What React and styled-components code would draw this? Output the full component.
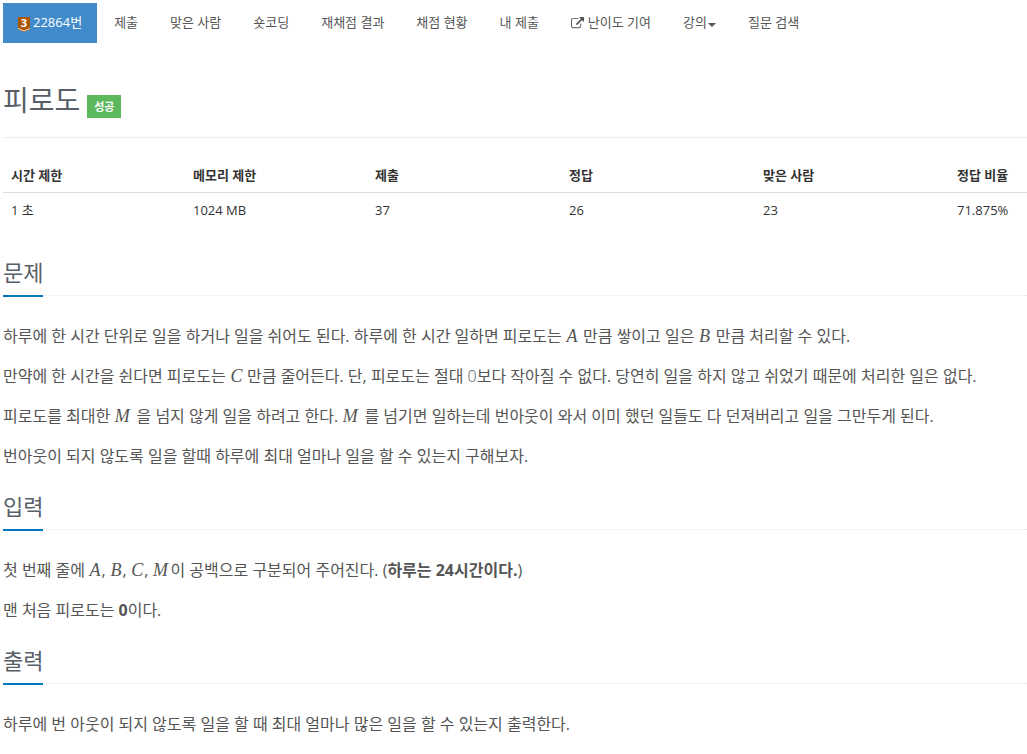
import React from 'react';
import styled, { createGlobalStyle } from 'styled-components'

const menu = [
	{ text: '제출' },
	{ text: '맞은 사람' },
	{ text: '숏코딩' },
	{ text: '재채점 결과' },
	{ text: '채점 현황' },
	{ text: '내 제출' },
	{ text: '난이도 기여', external: true },
	{ text: '강의', caret: true },
	{ text: '질문 검색' },
]

const limits = [
	['시간 제한', '1 초'],
	['메모리 제한', '1024 MB'],
	['제출', '37'],
	['정답', '26'],
	['맞은 사람', '23'],
	['정답 비율', '71.875%'],
]

export default function App() {
	return (
		<Page>
			<GlobalStyle />
			<Nav>
				<NavItem $active><TierBadge />22864번</NavItem>
				{menu.map(item => (
					<NavItem key={item.text}>
						{item.external && <ExternalIcon />}
						{item.text}
						{item.caret && <Caret />}
					</NavItem>
				))}
			</Nav>

			<TitleBar>
				<Title>피로도</Title>
				<Label>성공</Label>
			</TitleBar>

			<Table>
				<thead>
					<tr>{limits.map(([name]) => <Th key={name}>{name}</Th>)}</tr>
				</thead>
				<tbody>
					<tr>{limits.map(([name, value]) => <Td key={name}>{value}</Td>)}</tr>
				</tbody>
			</Table>

			<Section>
				<Headline><H2>문제</H2></Headline>
				<P>하루에 한 시간 단위로 일을 하거나 일을 쉬어도 된다. 하루에 한 시간 일하면 피로도는 <Var $w={13}>A</Var> 만큼 쌓이고 일은 <Var $w={13}>B</Var> 만큼 처리할 수 있다.</P>
				<P>만약에 한 시간을 쉰다면 피로도는 <Var $w={13}>C</Var> 만큼 줄어든다. 단, 피로도는 절대 <Light>0</Light>보다 작아질 수 없다. 당연히 일을 하지 않고 쉬었기 때문에 처리한 일은 없다.</P>
				<P>피로도를 최대한 <Var $w={18}>M</Var> 을 넘지 않게 일을 하려고 한다. <Var $w={18}>M</Var> 를 넘기면 일하는데 번아웃이 와서 이미 했던 일들도 다 던져버리고 일을 그만두게 된다.</P>
				<P>번아웃이 되지 않도록 일을 할때 하루에 최대 얼마나 일을 할 수 있는지 구해보자.</P>
			</Section>

			<Section>
				<Headline><H2>입력</H2></Headline>
				<P>첫 번째 줄에 <Var $w={12.5}>A</Var>, <Var $w={12.5}>B</Var>, <Var $w={13.5}>C</Var>, <Var $w={18}>M</Var>이 공백으로 구분되어 주어진다. (<b>하루는 24시간이다.</b>)</P>
				<P>맨 처음 피로도는 <b>0</b>이다.</P>
			</Section>

			<Section>
				<Headline><H2>출력</H2></Headline>
				<P>하루에 번 아웃이 되지 않도록 일을 할 때 최대 얼마나 많은 일을 할 수 있는지 출력한다.</P>
			</Section>
		</Page>
	)
}

function TierBadge() {
	return (
		<Badge viewBox="0 0 12 15">
			<path d="M0 0H12V12.4L6 15L0 12.4Z" fill="#ad5600" />
			<path d="M0 10.9L6 13.4L12 10.9V12.1L6 14.6L0 12.1Z" fill="#f3e3d3" />
			<text x="6" y="9.8" textAnchor="middle" fill="#fff" fontSize="11" fontWeight="700">3</text>
		</Badge>
	)
}

function ExternalIcon() {
	return (
		<Icon viewBox="0 0 1792 1792">
			<path d="M1408 928v320q0 119-84.5 203.5t-203.5 84.5h-832q-119 0-203.5-84.5t-84.5-203.5v-832q0-119 84.5-203.5t203.5-84.5h704q14 0 23 9t9 23v64q0 14-9 23t-23 9h-704q-66 0-113 47t-47 113v832q0 66 47 113t113 47h832q66 0 113-47t47-113v-320q0-14 9-23t23-9h64q14 0 23 9t9 23zm384-864v512q0 26-19 45t-45 19-45-19l-176-176-652 652q-10 10-23 10t-23-10l-114-114q-10-10-10-23t10-23l652-652-176-176q-19-19-19-45t19-45 45-19h512q26 0 45 19t19 45z" />
		</Icon>
	)
}


const GlobalStyle = createGlobalStyle`
	* {
		box-sizing: border-box;
	}
	body {
		margin: 0;
		background: #fff;
		color: #333;
		font-family: "Open Sans", "Noto Sans CJK KR", sans-serif;
		font-size: 13px;
		line-height: 20px;
		overflow: hidden;
	}
`

const Page = styled.div`
	padding: 3px 0 0 3px;
`

const Nav = styled.nav`
	display: flex;
	gap: 2px;
	height: 40px;
`

const NavItem = styled.a`
	display: flex;
	align-items: center;
	padding: 0 15px 2px;
	white-space: nowrap;
	color: ${props => props.$active ? '#fff' : '#555'};
	background: ${props => props.$active ? '#428bca' : 'transparent'};
`

const Badge = styled.svg`
	width: 12px;
	height: 15px;
	margin: 5px 3px 0 0;
	overflow: visible;
`

const Icon = styled.svg`
	width: 13px;
	height: 13px;
	margin: 2px 4px 0 0;
	fill: #555;
`

const Caret = styled.span`
	margin: 5px 0 0 1px;
	border-top: 4px solid #555;
	border-left: 4px solid transparent;
	border-right: 4px solid transparent;
`

const TitleBar = styled.div`
	display: flex;
	align-items: flex-start;
	height: 95px;
	padding-top: 36px;
	border-bottom: 1px solid #eee;
`

const Title = styled.h1`
	margin: 0;
	font-size: 28px;
	font-weight: 400;
	line-height: 42px;
	color: #585f69;
`

const Label = styled.span`
	width: 34px;
	height: 23px;
	margin: 16px 0 0 7px;
	text-align: center;
	font-size: 11px;
	font-weight: 700;
	line-height: 23px;
	color: #fff;
	background: #5cb85c;
`

const Table = styled.table`
	width: 1024px;
	margin-top: 20px;
	border-collapse: collapse;
	table-layout: fixed;
	th:nth-child(-n+2) {
		width: 182px;
	}
	th:nth-child(n+3) {
		width: 194px;
	}
	th:last-child {
		width: 78px;
	}
`

const Th = styled.th`
	height: 34px;
	padding: 0 8px;
	text-align: left;
	font-weight: 700;
	white-space: nowrap;
	border-bottom: 1px solid #ddd;
`

const Td = styled.td`
	height: 36px;
	padding: 0 8px;
`

const Section = styled.section`
	margin-bottom: 11px;
	&:first-of-type {
		margin-top: 25px;
	}
`

const Headline = styled.div`
	display: flex;
	height: 43px;
	margin-bottom: 20px;
	border-bottom: 1px dotted #e4e9f0;
`

const H2 = styled.h2`
	height: 44px;
	margin: 0;
	font-size: 22px;
	font-weight: 400;
	line-height: 39px;
	color: #585f69;
	border-bottom: 2px solid #0076c0;
`

const P = styled.p`
	height: 40px;
	margin: 0;
	font-size: 16px;
	line-height: 40px;
	white-space: nowrap;
	color: #555;
`

const Var = styled.i`
	display: inline-block;
	width: ${props => props.$w}px;
	padding-left: 0.5px;
	font-family: "Liberation Serif", serif;
	font-size: 18px;
	line-height: 20px;
`

const Light = styled.span`
	font-weight: 300;
`
